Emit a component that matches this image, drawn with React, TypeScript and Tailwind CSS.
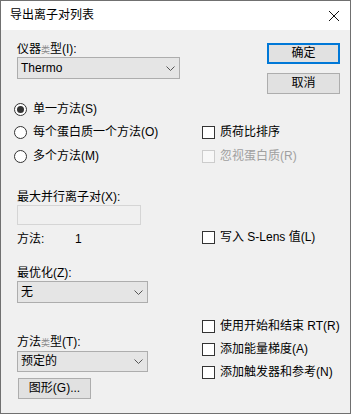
import { ReactNode } from "react";

const font = {
  fontFamily: '"Liberation Sans", "Noto Sans CJK SC", sans-serif',
};

const Small = ({ children }: { children: ReactNode }) => (
  <span className="text-[9px] text-[#8a8a8a]">{children}</span>
);

const Radio = ({ checked, label }: { checked?: boolean; label: string }) => (
  <div className="flex items-center gap-[6px]">
    <span className="flex h-[13px] w-[13px] items-center justify-center rounded-full border border-[#333333] bg-white">
      {checked && <span className="h-[7px] w-[7px] rounded-full bg-[#333333]" />}
    </span>
    <span>{label}</span>
  </div>
);

const Check = ({ label, disabled }: { label: ReactNode; disabled?: boolean }) => (
  <div className="flex h-[20px] items-center gap-[5px]">
    <span
      className={
        disabled
          ? "h-[13px] w-[13px] border border-[#cccccc] bg-[#f7f7f7]"
          : "h-[13px] w-[13px] border border-[#333333] bg-white"
      }
    />
    <span className={disabled ? "text-[#a0a0a0]" : ""}>{label}</span>
  </div>
);

const Chevron = () => (
  <svg width="9" height="5" viewBox="0 0 9 5" className="shrink-0">
    <path d="M0.5 0.5 L4.5 4.5 L8.5 0.5" fill="none" stroke="#555555" strokeWidth="1" />
  </svg>
);

const Combo = ({ value, w, h }: { value: string; w: string; h: string }) => (
  <div
    className={`flex items-center justify-between border border-[#adadad] bg-[#e5e5e5] pl-[3px] pr-[4px] ${w} ${h}`}
  >
    <span>{value}</span>
    <Chevron />
  </div>
);

export default function App() {
  return (
    <div
      style={font}
      className="flex h-[414px] w-[351px] flex-col border border-[#707070] bg-[#f0f0f0] text-[12px] leading-[15px] text-black"
    >
      {/* title bar */}
      <div className="flex h-[29px] items-center justify-between bg-white pl-[9px] pr-[11px]">
        <span>导出离子对列表</span>
        <svg width="10" height="10" viewBox="0 0 10 10">
          <path d="M0 0 L10 10 M10 0 L0 10" stroke="#111111" strokeWidth="1" />
        </svg>
      </div>

      <div className="flex flex-col pl-[13px] pr-[10px]">
        {/* instrument + buttons */}
        <div className="flex justify-between pt-[12px]">
          <div className="ml-[3px] flex flex-col">
            <span className="h-[15px]">
              仪器<Small>类</Small>型(I):
            </span>
            <Combo value="Thermo" w="w-[163px]" h="h-[22px]" />
          </div>
          <div className="mt-[1px] flex flex-col gap-[9px]">
            <button className="flex h-[21px] w-[73px] items-center justify-center border-2 border-[#0078d7] bg-[#e1e1e1]">
              确定
            </button>
            <button className="flex h-[21px] w-[73px] items-center justify-center border border-[#adadad] bg-[#e1e1e1]">
              取消
            </button>
          </div>
        </div>

        {/* method radios */}
        <div className="mt-[4px] grid grid-cols-[188px_1fr] grid-rows-[23px_23px_24px] items-center">
          <Radio checked label="单一方法(S)" />
          <div />
          <Radio label="每个蛋白质一个方法(O)" />
          <Check label="质荷比排序" />
          <Radio label="多个方法(M)" />
          <Check label="忽视蛋白质(R)" disabled />
        </div>

        {/* lower area */}
        <div className="flex">
          <div className="flex w-[188px] flex-col pl-[3px]">
            <span className="mt-[22px] h-[15px]">最大并行离子对(X):</span>
            <div className="h-[20px] w-[124px] border border-[#d5d5d5] bg-[#f0f0f0]" />
            <div className="mt-[3px] flex h-[22px] items-center">
              <span className="w-[58px]">方法:</span>
              <span>1</span>
            </div>
            <span className="mt-[16px] h-[15px]">最优化(Z):</span>
            <Combo value="无" w="w-[131px]" h="h-[22px]" />
            <span className="mt-[32px] h-[15px]">
              方法<Small>类</Small>型(T):
            </span>
            <div className="mt-[1px]">
              <Combo value="预定的" w="w-[131px]" h="h-[21px]" />
            </div>
            <button className="ml-[1px] mt-[6px] flex h-[21px] w-[73px] items-center justify-center border border-[#adadad] bg-[#e1e1e1]">
              图形(G)...
            </button>
          </div>
          <div className="flex flex-col">
            <div className="mt-[59px]">
              <Check label="写入 S-Lens 值(L)" />
            </div>
            <div className="mt-[69px] flex flex-col gap-[3px]">
              <Check label="使用开始和结束 RT(R)" />
              <Check label="添加能量梯度(A)" />
              <Check label="添加触发器和参考(N)" />
            </div>
          </div>
        </div>
      </div>
    </div>
  );
}
